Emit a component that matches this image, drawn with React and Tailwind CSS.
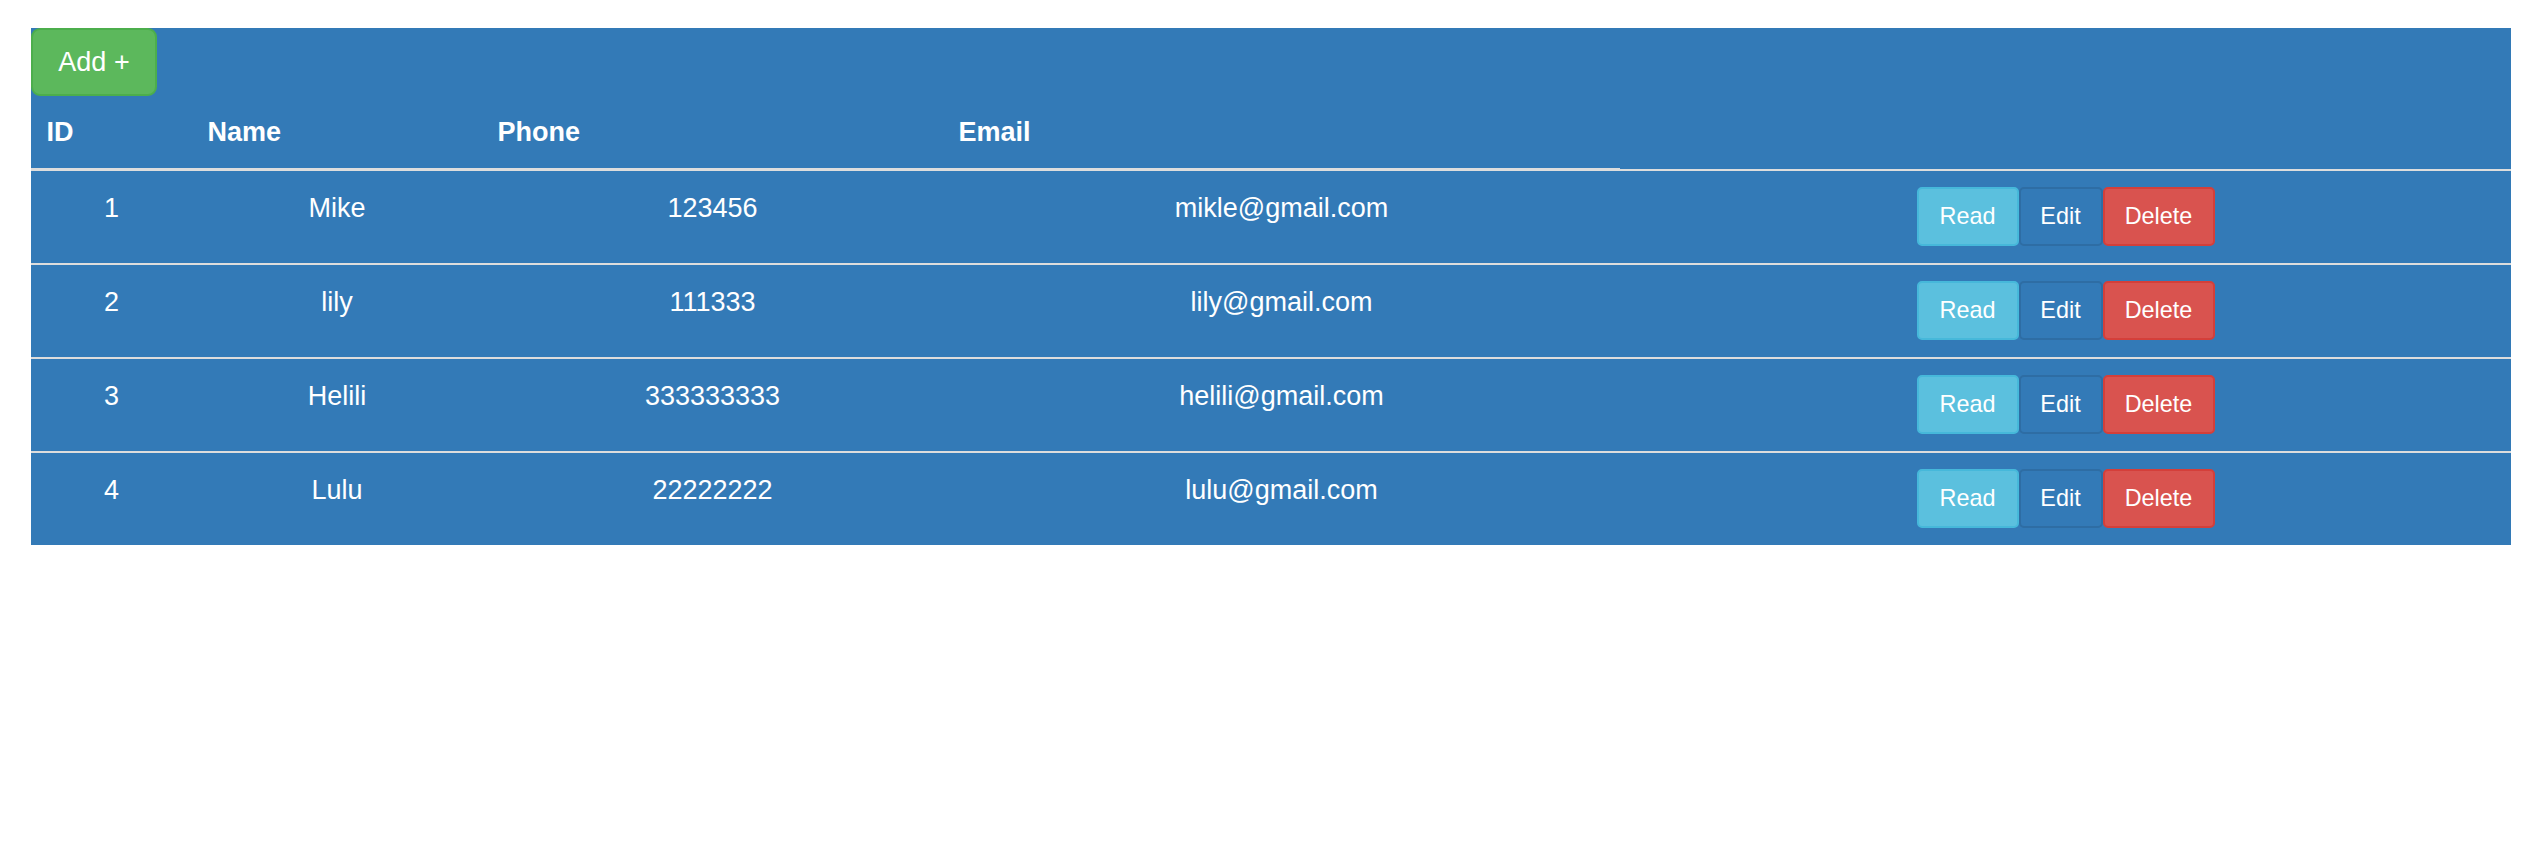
import React from "react";

const rows = [
  { id: 1, name: "Mike", phone: "123456", email: "mikle@gmail.com" },
  { id: 2, name: "lily", phone: "111333", email: "lily@gmail.com" },
  { id: 3, name: "Helili", phone: "333333333", email: "helili@gmail.com" },
  { id: 4, name: "Lulu", phone: "22222222", email: "lulu@gmail.com" },
];

const cols = "grid grid-cols-[161px_290px_461px_677px_1fr]";

export default function App() {
  return (
    <div className="min-h-[864px] bg-white pt-[28px] px-[31px] font-['Liberation_Sans',Arial,sans-serif] text-white">
      <div className="bg-[#337ab7]">
        <div className="flex">
          <button className="h-[68px] w-[126px] rounded-[9px] border-2 border-[#4cae4c] bg-[#5cb85c] text-[27px] leading-[36px] text-white">
            Add +
          </button>
        </div>
        <div className={`${cols} h-[72px] text-[27px] font-bold leading-[40px]`}>
          <div className="pl-[15.5px] pt-[16px]">ID</div>
          <div className="pl-[15.5px] pt-[16px]">Name</div>
          <div className="pl-[15.5px] pt-[16px]">Phone</div>
          <div className="pl-[15.5px] pt-[16px]">Email</div>
          <div></div>
        </div>
        <div className="flex h-[3px]">
          <div className="w-[1589px] bg-[#dddddd]"></div>
          <div className="mt-[1px] h-[2px] flex-1 bg-[#dddddd]"></div>
        </div>
        <div className="divide-y-2 divide-[#dddddd]">
          {rows.map((r) => (
            <div key={r.id} className={`${cols} box-content h-[92px] text-[27px] leading-[40px]`}>
              <div className="pt-[17px] text-center">{r.id}</div>
              <div className="pt-[17px] text-center">{r.name}</div>
              <div className="pt-[17px] text-center">{r.phone}</div>
              <div className="pt-[17px] text-center">{r.email}</div>
              <div className="flex justify-center pt-[16px]">
                <div className="flex h-[59px] text-[23.4px] leading-[33px]">
                  <button className="w-[102px] rounded-[5px] border-2 border-[#46b8da] bg-[#5bc0de] text-white">
                    Read
                  </button>
                  <button className="w-[84px] rounded-[5px] border-2 border-[#2e6da4] bg-[#337ab7] text-white">
                    Edit
                  </button>
                  <button className="w-[112px] rounded-[5px] border-2 border-[#d43f3a] bg-[#d9534f] text-white">
                    Delete
                  </button>
                </div>
              </div>
            </div>
          ))}
        </div>
      </div>
    </div>
  );
}
